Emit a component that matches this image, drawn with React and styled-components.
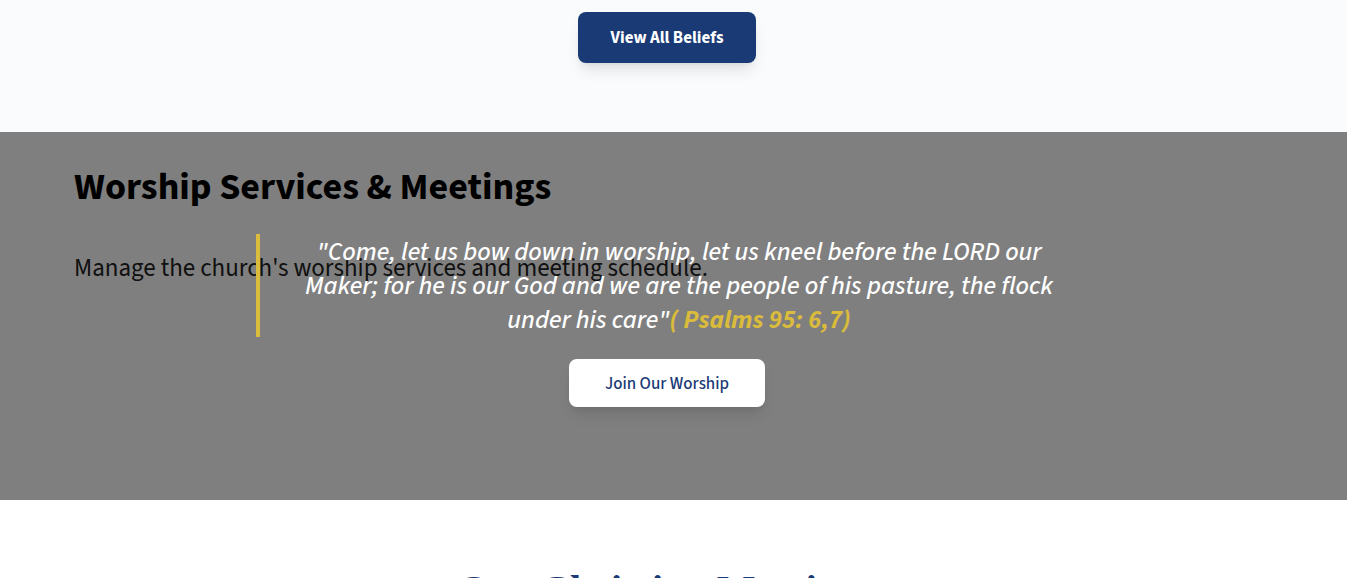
import React from "react";
import styled, { createGlobalStyle } from "styled-components";

const sans = `"Source Sans 3", "Source Sans Pro", "Noto Sans CJK SC", sans-serif`;
const navy = "#1a3a76";
const gold = "#dabb3c";

const GlobalStyle = createGlobalStyle`
  *, *::before, *::after { box-sizing: border-box; }
  html { overflow: hidden; }
  body { margin: 0; background: #fff; font-family: ${sans}; font-size: 16px; }
  h2, p, blockquote { margin: 0; }
`;

const Section = styled.section`
  display: flex;
  flex-direction: column;
  align-items: center;
  padding: ${(p) => p.$padding};
  background: ${(p) => p.$background};
`;

const Button = styled.button`
  padding: ${(p) => (p.$solid ? "14px 33px 13px" : "13px 36px 11px")};
  border: 0;
  border-radius: 8px;
  background: ${(p) => (p.$solid ? navy : "#fff")};
  color: ${(p) => (p.$solid ? "#fff" : navy)};
  font-family: inherit;
  font-size: 17px;
  font-weight: ${(p) => (p.$solid ? 700 : 500)};
  line-height: 24px;
  white-space: nowrap;
  cursor: pointer;
  box-shadow: 0 10px 15px -3px rgba(0, 0, 0, 0.1), 0 4px 6px -4px rgba(0, 0, 0, 0.1);
`;

const Hero = styled.section`
  display: grid;
  background: #fff;
  > * { grid-area: 1 / 1; }
`;

const Backdrop = styled.div`
  padding: 28px 74px;
  color: #000;
`;

const BackdropTitle = styled.h2`
  font-size: 38px;
  line-height: 54px;
  font-weight: 700;
`;

const BackdropText = styled.p`
  margin-top: 36px;
  color: #222;
  font-size: 25px;
  line-height: 36px;
`;

const Overlay = styled.div`
  position: relative;
  display: flex;
  flex-direction: column;
  align-items: center;
  gap: 22px;
  padding: 102px 13px 93px 0;
  background: rgba(0, 0, 0, 0.5);
`;

const Quote = styled.blockquote`
  width: 100%;
  max-width: 822px;
  padding: 1px 0 0 20px;
  border-left: 4px solid ${gold};
  color: #fff;
  font-size: 26px;
  font-style: italic;
  font-weight: 500;
  line-height: 34px;
  text-align: center;
`;

const Verse = styled.cite`
  color: ${gold};
  font-weight: 700;
`;

const Heading = styled.h2`
  color: ${navy};
  font-family: "Liberation Serif", serif;
  font-size: 41px;
  font-weight: 700;
  line-height: 48px;
`;

export default function App() {
  return (
    <main>
      <GlobalStyle />
      <Section $padding="12px 13px 69px 0" $background="#f9fbfc">
        <Button type="button" $solid>View All Beliefs</Button>
      </Section>
      <Hero>
        <Backdrop>
          <BackdropTitle>Worship Services &amp; Meetings</BackdropTitle>
          <BackdropText>Manage the church's worship services and meeting schedule.</BackdropText>
        </Backdrop>
        <Overlay>
          <Quote>
            "Come, let us bow down in worship, let us kneel before the LORD our Maker; for he is our God
            and we are the people of his pasture, the flock under his care"<Verse>( Psalms 95: 6,7)</Verse>
          </Quote>
          <Button type="button">Join Our Worship</Button>
        </Overlay>
      </Hero>
      <Section $padding="65px 13px 64px 0" $background="#fff">
        <Heading>Our Christian Meetings</Heading>
      </Section>
    </main>
  );
}
